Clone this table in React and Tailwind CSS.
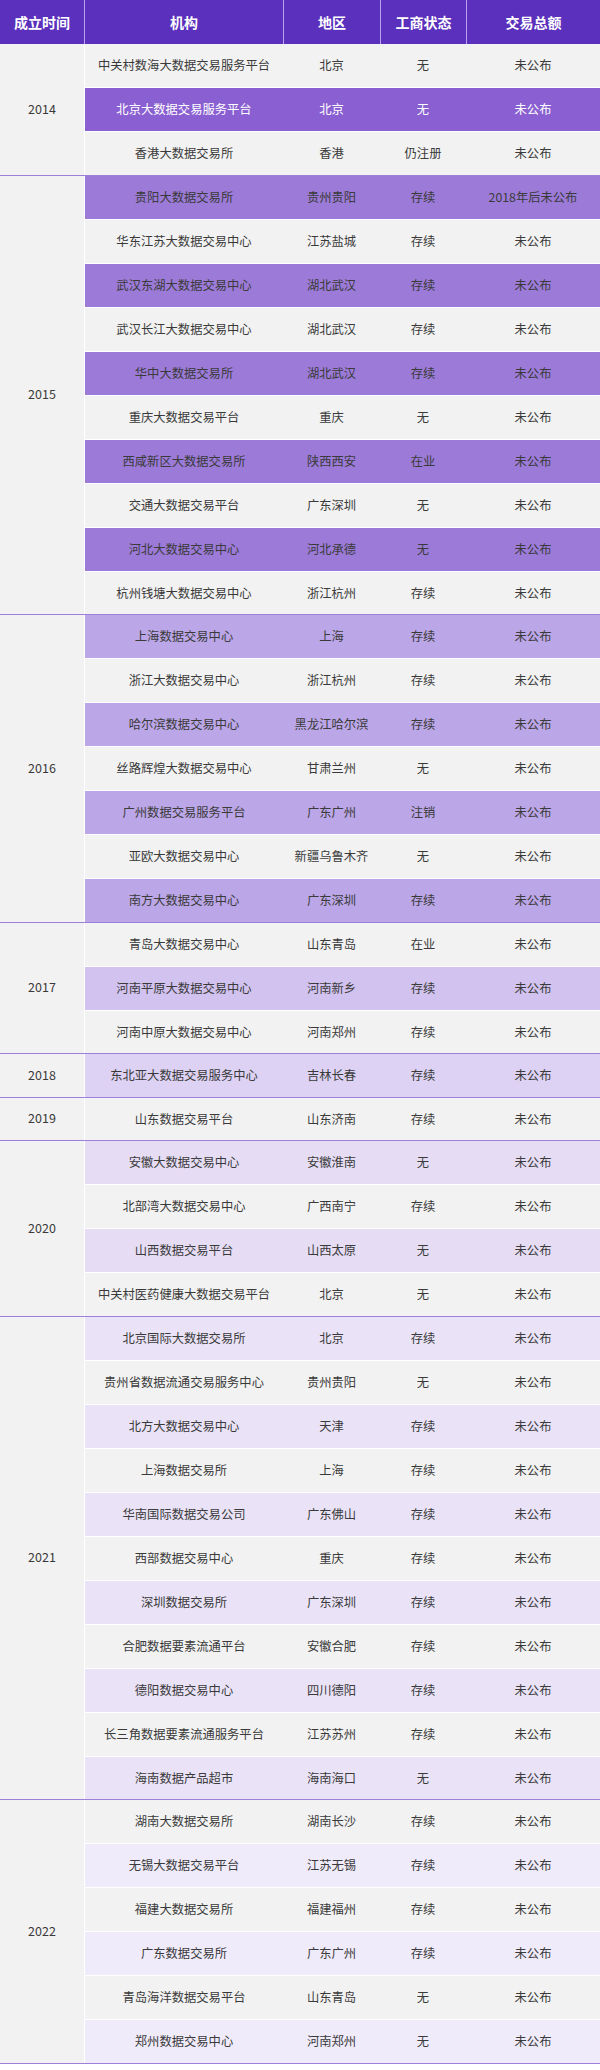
const HEADERS = ['成立时间', '机构', '地区', '工商状态', '交易总额']

// purple shade for the striped rows of each year
const GROUPS = [
    {
        year: '2014', stripe: 'bg-[#8a5fd1] text-white',
        rows: [
            ['中关村数海大数据交易服务平台', '北京', '无', '未公布'],
            ['北京大数据交易服务平台', '北京', '无', '未公布'],
            ['香港大数据交易所', '香港', '仍注册', '未公布'],
        ],
    },
    {
        year: '2015', stripe: 'bg-[#9c7ad8]',
        rows: [
            ['贵阳大数据交易所', '贵州贵阳', '存续', '2018年后未公布'],
            ['华东江苏大数据交易中心', '江苏盐城', '存续', '未公布'],
            ['武汉东湖大数据交易中心', '湖北武汉', '存续', '未公布'],
            ['武汉长江大数据交易中心', '湖北武汉', '存续', '未公布'],
            ['华中大数据交易所', '湖北武汉', '存续', '未公布'],
            ['重庆大数据交易平台', '重庆', '无', '未公布'],
            ['西咸新区大数据交易所', '陕西西安', '在业', '未公布'],
            ['交通大数据交易平台', '广东深圳', '无', '未公布'],
            ['河北大数据交易中心', '河北承德', '无', '未公布'],
            ['杭州钱塘大数据交易中心', '浙江杭州', '存续', '未公布'],
        ],
    },
    {
        year: '2016', stripe: 'bg-[#bba6e7]',
        rows: [
            ['上海数据交易中心', '上海', '存续', '未公布'],
            ['浙江大数据交易中心', '浙江杭州', '存续', '未公布'],
            ['哈尔滨数据交易中心', '黑龙江哈尔滨', '存续', '未公布'],
            ['丝路辉煌大数据交易中心', '甘肃兰州', '无', '未公布'],
            ['广州数据交易服务平台', '广东广州', '注销', '未公布'],
            ['亚欧大数据交易中心', '新疆乌鲁木齐', '无', '未公布'],
            ['南方大数据交易中心', '广东深圳', '存续', '未公布'],
        ],
    },
    {
        year: '2017', stripe: 'bg-[#d1c2ef]',
        rows: [
            ['青岛大数据交易中心', '山东青岛', '在业', '未公布'],
            ['河南平原大数据交易中心', '河南新乡', '存续', '未公布'],
            ['河南中原大数据交易中心', '河南郑州', '存续', '未公布'],
        ],
    },
    {
        year: '2018', stripe: 'bg-[#ddd2f3]',
        rows: [['东北亚大数据交易服务中心', '吉林长春', '存续', '未公布']],
    },
    {
        year: '2019', stripe: 'bg-[#e3daf5]',
        rows: [['山东数据交易平台', '山东济南', '存续', '未公布']],
    },
    {
        year: '2020', stripe: 'bg-[#e6ddf5]',
        rows: [
            ['安徽大数据交易中心', '安徽淮南', '无', '未公布'],
            ['北部湾大数据交易中心', '广西南宁', '存续', '未公布'],
            ['山西数据交易平台', '山西太原', '无', '未公布'],
            ['中关村医药健康大数据交易平台', '北京', '无', '未公布'],
        ],
    },
    {
        year: '2021', stripe: 'bg-[#eae3f7]',
        rows: [
            ['北京国际大数据交易所', '北京', '存续', '未公布'],
            ['贵州省数据流通交易服务中心', '贵州贵阳', '无', '未公布'],
            ['北方大数据交易中心', '天津', '存续', '未公布'],
            ['上海数据交易所', '上海', '存续', '未公布'],
            ['华南国际数据交易公司', '广东佛山', '存续', '未公布'],
            ['西部数据交易中心', '重庆', '存续', '未公布'],
            ['深圳数据交易所', '广东深圳', '存续', '未公布'],
            ['合肥数据要素流通平台', '安徽合肥', '存续', '未公布'],
            ['德阳数据交易中心', '四川德阳', '存续', '未公布'],
            ['长三角数据要素流通服务平台', '江苏苏州', '存续', '未公布'],
            ['海南数据产品超市', '海南海口', '无', '未公布'],
        ],
    },
    {
        year: '2022', stripe: 'bg-[#f0ebfa]',
        rows: [
            ['湖南大数据交易所', '湖南长沙', '存续', '未公布'],
            ['无锡大数据交易平台', '江苏无锡', '存续', '未公布'],
            ['福建大数据交易所', '福建福州', '存续', '未公布'],
            ['广东数据交易所', '广东广州', '存续', '未公布'],
            ['青岛海洋数据交易平台', '山东青岛', '无', '未公布'],
            ['郑州数据交易中心', '河南郑州', '无', '未公布'],
        ],
    },
]

const App = () => {
    // global row counter: odd rows are striped
    let rowIndex = 0

    return (
        <div className="w-[600px] bg-white font-['Noto_Sans_CJK_SC','Noto_Sans',sans-serif] text-[#3a3a3a]">

            {/* ============ HEADER ============ */}
            <div className="grid grid-cols-[85px_199px_97px_86px_1fr] h-[44px] bg-[#5b30bd] text-white font-bold text-[14px]">
                {HEADERS.map((h, i) => (
                    <div
                        key={h}
                        className={`flex items-center justify-center ${i < HEADERS.length - 1 ? 'border-r border-[#b9a4ec]' : ''}`}
                    >
                        {h}
                    </div>
                ))}
            </div>

            {/* ============ YEAR GROUPS ============ */}
            {GROUPS.map(group => (
                <div key={group.year} className="flex border-b-[1.5px] border-[#9c80da]">
                    <div className="w-[85px] shrink-0 flex items-center justify-center bg-[#f2f2f2] border-r border-white text-[12.5px]">
                        {group.year}
                    </div>
                    <div className="flex-1 flex flex-col">
                        {group.rows.map((row, i) => {
                            const striped = rowIndex++ % 2 === 1
                            const last = i === group.rows.length - 1
                            return (
                                <div
                                    key={row[0]}
                                    className={`grid grid-cols-[198px_97px_86px_1fr] items-center text-center text-[12.3px] ${last ? 'h-[42.5px]' : 'h-[44px] border-b border-white'} ${striped ? group.stripe : 'bg-[#f2f2f2]'}`}
                                >
                                    {row.map((cell, j) => (
                                        <div key={j}>{cell}</div>
                                    ))}
                                </div>
                            )
                        })}
                    </div>
                </div>
            ))}
        </div>
    )
}

export default App
